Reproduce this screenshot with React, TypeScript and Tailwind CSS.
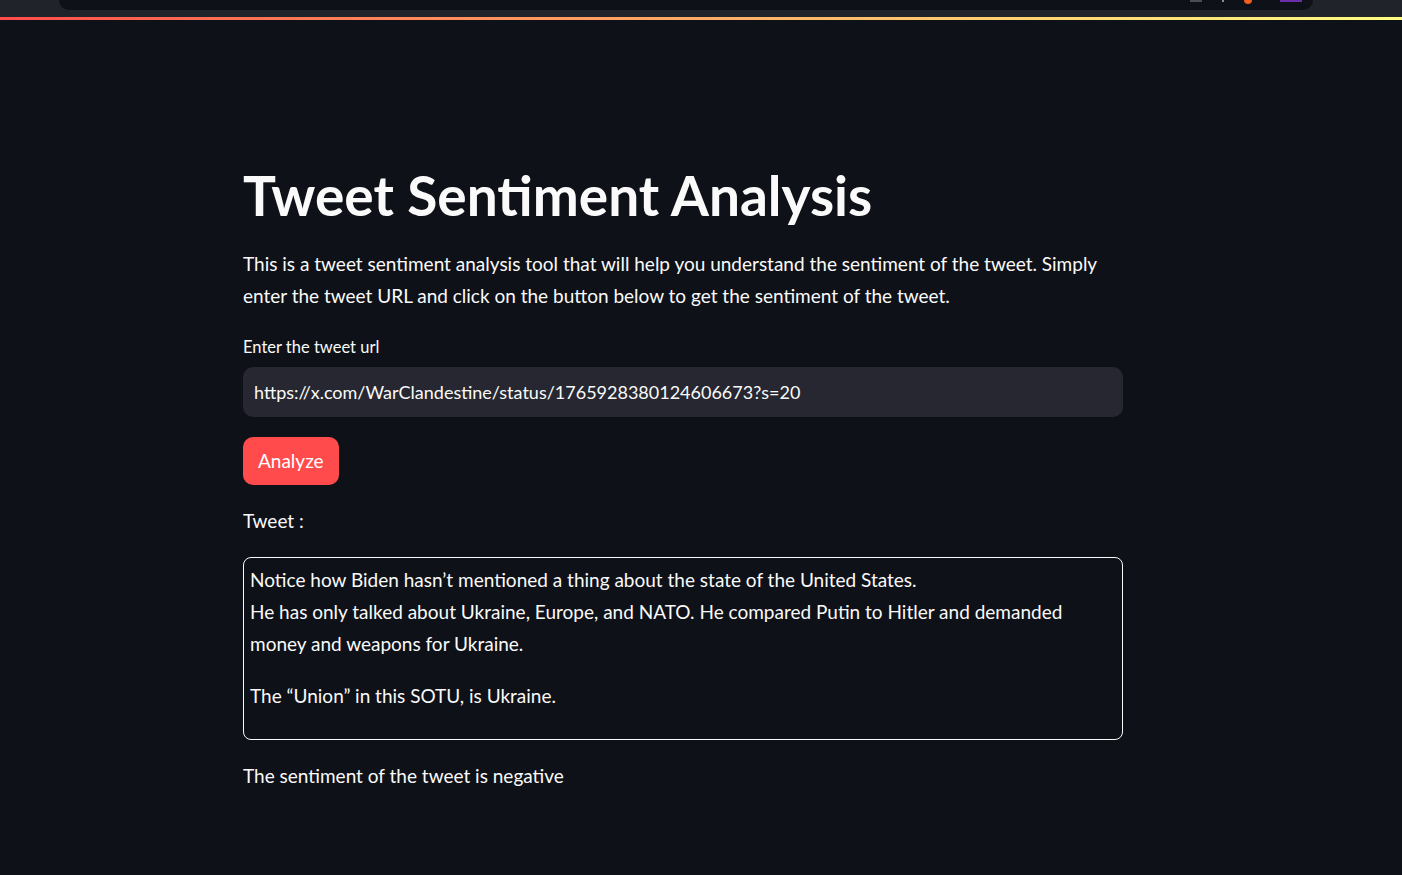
const font = { fontFamily: "Lato, 'Noto Sans', sans-serif" };

function BrowserStrip() {
  return (
    <div className="h-[17px] bg-[#202329]">
      <div className="relative ml-[59px] h-[10px] w-[1254px] rounded-b-[10px] bg-[#0e1117]">
        <span className="absolute left-[1131px] top-0 h-[2px] w-[12px] bg-[#4a4d55]" />
        <span className="absolute left-[1163px] top-0 h-[2px] w-[2px] bg-[#8a8d95]" />
        <span className="absolute left-[1185px] top-0 h-[4px] w-[8px] rounded-b-full bg-[#f25c1f]" />
        <span className="absolute left-[1221px] top-0 h-[2px] w-[22px] bg-[#6b2ea6]" />
      </div>
    </div>
  );
}

export default function App() {
  return (
    <div className="min-h-[875px] bg-[#0e1117] text-[#fafafa]" style={font}>
      <BrowserStrip />
      <div className="h-[3px] bg-gradient-to-r from-[#ff4b4b] to-[#fffd80]" />

      <main className="ml-[243px] flex w-[880px] flex-col pt-[142px]">
        <h1 className="text-[55px] font-bold leading-[66px]">
          Tweet Sentiment Analysis
        </h1>

        <p className="mt-5 text-[19px] leading-8">
          This is a tweet sentiment analysis tool that will help you understand the sentiment of the tweet. Simply
          <br />
          enter the tweet URL and click on the button below to get the sentiment of the tweet.
        </p>

        <label className="mt-[21px] text-[16.5px] leading-7">Enter the tweet url</label>
        <div className="mt-[6px] flex h-[50px] items-center rounded-[10px] bg-[#262730] px-[11px] text-[18px]">
          https://x.com/WarClandestine/status/1765928380124606673?s=20
        </div>

        <div className="mt-5">
          <button className="h-[48px] rounded-[10px] bg-[#ff4b4b] px-[15px] text-[19px] text-white">
            Analyze
          </button>
        </div>

        <p className="mt-5 text-[19px] leading-8">Tweet :</p>

        <div className="mt-5 h-[183px] rounded-[8px] border border-[#fafafa] px-[6px] pt-[6px] text-[19px] leading-8">
          <p>
            Notice how Biden hasn’t mentioned a thing about the state of the United States.
            <br />
            He has only talked about Ukraine, Europe, and NATO. He compared Putin to Hitler and demanded
            <br />
            money and weapons for Ukraine.
          </p>
          <p className="mt-5">The “Union” in this SOTU, is Ukraine.</p>
        </div>

        <p className="mt-5 text-[19px] leading-8">The sentiment of the tweet is negative</p>
      </main>
    </div>
  );
}
